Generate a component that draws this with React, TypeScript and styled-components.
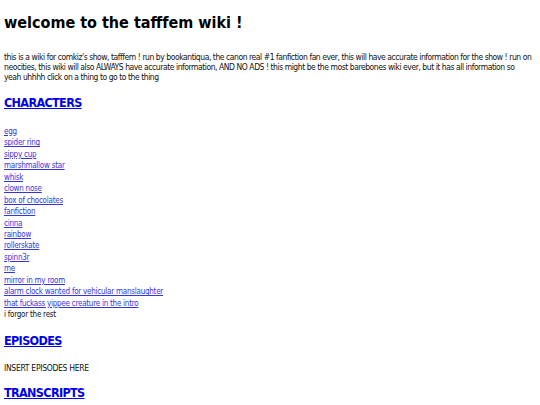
import React from 'react';
import styled, { createGlobalStyle } from 'styled-components';

const GlobalStyle = createGlobalStyle`
  body {
    margin: 0;
    background: #fff;
    color: #111;
    font-family: 'DejaVu Sans Condensed', 'DejaVu Sans', sans-serif;
  }
`;

const characters = [
  'egg',
  'spider ring',
  'sippy cup',
  'marshmallow star',
  'whisk',
  'clown nose',
  'box of chocolates',
  'fanfiction',
  'cinna',
  'rainbow',
  'rollerskate',
  'spinn3r',
  'me',
  'mirror in my room',
  'alarm clock wanted for vehicular manslaughter',
  'that fuckass yippee creature in the intro',
];

const App: React.FC = () => (
  <Page>
    <GlobalStyle />
    <Title>welcome to the tafffem wiki !</Title>
    <Intro>
      this is a wiki for comkiz's show, tafffem ! run by bookantiqua, the canon real #1 fanfiction fan
      ever, this will have accurate information for the show ! run on neocities, this wiki will also
      ALWAYS have accurate information, AND NO ADS ! this might be the most barebones wiki ever, but it
      has all information so yeah uhhhh click on a thing to go to the thing
    </Intro>

    <Section $gap={14.6}>
      <a href="#characters">CHARACTERS</a>
    </Section>
    <LinkList>
      {characters.map((name) => (
        <Item key={name}>
          <a href={`#${name.replace(/ /g, '-')}`}>{name}</a>
        </Item>
      ))}
      <Item>i forgor the rest</Item>
    </LinkList>

    <Section $gap={13.7}>
      <a href="#episodes">EPISODES</a>
    </Section>
    <Note>INSERT EPISODES HERE</Note>

    <Section $gap={13.5}>
      <a href="#transcripts">TRANSCRIPTS</a>
    </Section>
  </Page>
);

export default App;

const Page = styled.div`
  display: flex;
  flex-direction: column;
  align-items: flex-start;
  padding: 0 4px 20px;
`;

const Title = styled.h1`
  margin: 13px 0 0;
  font-size: 16px;
  line-height: 20px;
  font-weight: bold;
  color: #000;
`;

const Intro = styled.p`
  margin: 18.8px 4.5px 0 0;
  font-size: 8.5px;
  line-height: 10px;
  letter-spacing: -0.45px;
`;

const Section = styled.h2<{ $gap: number }>`
  margin: ${(p) => p.$gap}px 0 0;
  font-size: 12.5px;
  line-height: 14px;
  font-weight: bold;
  letter-spacing: -0.65px;

  a {
    color: #0000ee;
  }
`;

const LinkList = styled.div`
  display: flex;
  flex-direction: column;
  margin-top: 15.5px;
  font-size: 8px;
  line-height: 11.45px;
  letter-spacing: -0.25px;

  a {
    color: #3535dd;
  }
`;

const Item = styled.div`
  color: #111;
`;

const Note = styled.p`
  margin: 14.3px 0 0;
  font-size: 8.5px;
  line-height: 10px;
  letter-spacing: -0.3px;
`;
